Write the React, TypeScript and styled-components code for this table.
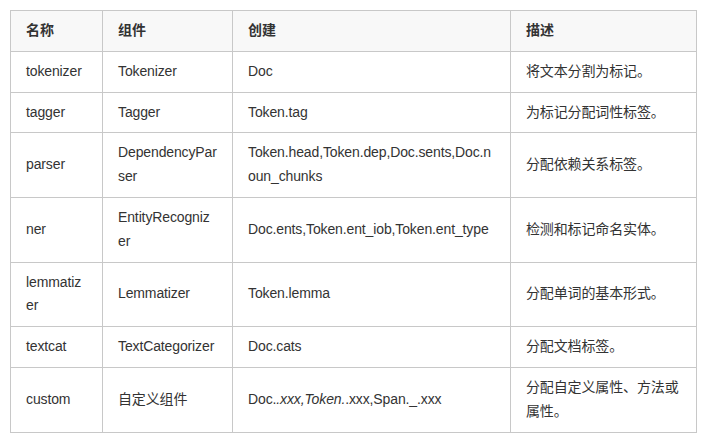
import React from "react";
import styled, { createGlobalStyle } from "styled-components";

const Global = createGlobalStyle`
  html, body { margin: 0; padding: 0; background: #ffffff; }
  body {
    font-family: "Liberation Sans", Arial, "Noto Sans CJK SC", sans-serif;
    color: #333333;
  }
`;

const Page = styled.div`
  padding: 10px 12px 10px 10px;
`;

const Table = styled.table`
  border-collapse: collapse;
  table-layout: fixed;
  width: 686px;
  font-size: 14px;
  line-height: 1.7;
`;

const HeadCell = styled.th`
  background: #f8f8f8;
  border: 1px solid #c8c8c8;
  padding: 8px 15px;
  text-align: left;
  font-weight: bold;
  color: #333333;
  vertical-align: middle;
`;

const Cell = styled.td`
  border: 1px solid #c8c8c8;
  padding: 8px 15px;
  text-align: left;
  vertical-align: middle;
  word-break: break-all;
  letter-spacing: -0.125px;
  color: #333333;
`;

const Em = styled.em`
  font-style: italic;
`;

type Row = { name: string; comp: string; creates: React.ReactNode; desc: string };

const rows: Row[] = [
  { name: "tokenizer", comp: "Tokenizer", creates: "Doc", desc: "将文本分割为标记。" },
  { name: "tagger", comp: "Tagger", creates: "Token.tag", desc: "为标记分配词性标签。" },
  {
    name: "parser",
    comp: "DependencyParser",
    creates: "Token.head,Token.dep,Doc.sents,Doc.noun_chunks",
    desc: "分配依赖关系标签。",
  },
  {
    name: "ner",
    comp: "EntityRecognizer",
    creates: "Doc.ents,Token.ent_iob,Token.ent_type",
    desc: "检测和标记命名实体。",
  },
  { name: "lemmatizer", comp: "Lemmatizer", creates: "Token.lemma", desc: "分配单词的基本形式。" },
  { name: "textcat", comp: "TextCategorizer", creates: "Doc.cats", desc: "分配文档标签。" },
  {
    name: "custom",
    comp: "自定义组件",
    creates: (
      <>
        Doc.<Em>.xxx,Token.</Em>.xxx,Span._.xxx
      </>
    ),
    desc: "分配自定义属性、方法或属性。",
  },
];

export default function App() {
  return (
    <>
      <Global />
      <Page>
        <Table>
          <colgroup>
            <col style={{ width: 92 }} />
            <col style={{ width: 130 }} />
            <col style={{ width: 278 }} />
            <col style={{ width: 186 }} />
          </colgroup>
          <thead>
            <tr>
              <HeadCell>名称</HeadCell>
              <HeadCell>组件</HeadCell>
              <HeadCell>创建</HeadCell>
              <HeadCell>描述</HeadCell>
            </tr>
          </thead>
          <tbody>
            {rows.map((r) => (
              <tr key={r.name}>
                <Cell>{r.name}</Cell>
                <Cell>{r.comp}</Cell>
                <Cell>{r.creates}</Cell>
                <Cell>{r.desc}</Cell>
              </tr>
            ))}
          </tbody>
        </Table>
      </Page>
    </>
  );
}
